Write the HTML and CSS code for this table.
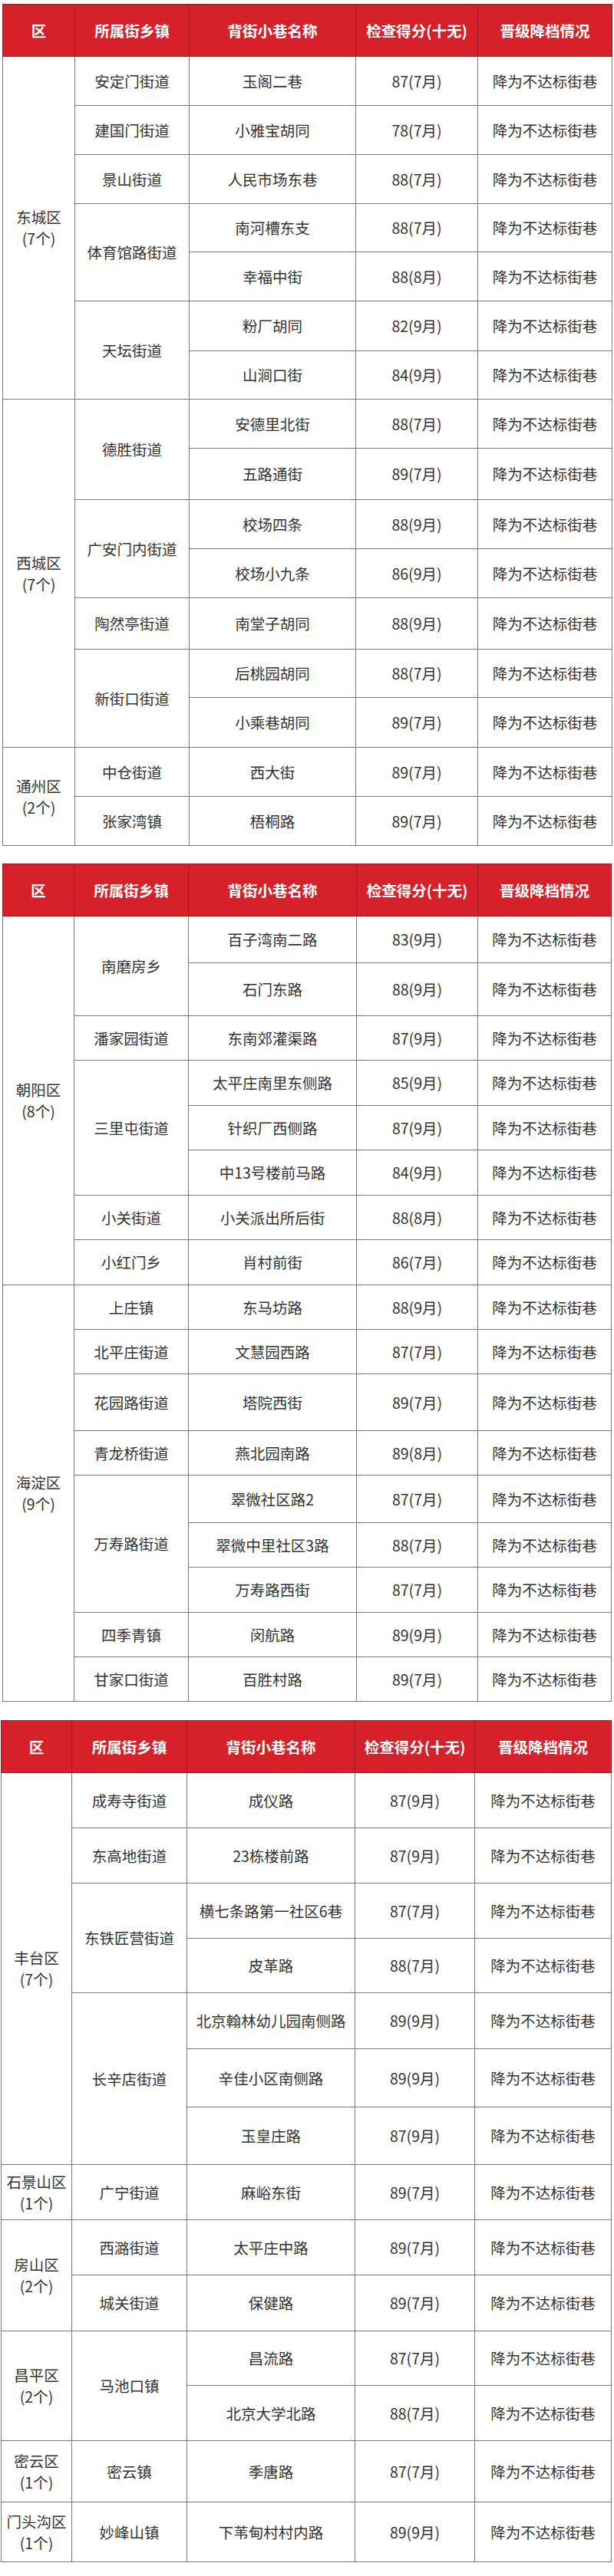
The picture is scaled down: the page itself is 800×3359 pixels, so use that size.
FILE: index.html
```html
<!DOCTYPE html>
<html lang="zh-CN">
<head>
<meta charset="utf-8">
<title>背街小巷检查结果</title>
<link rel="stylesheet" href="styles.css">
</head>
<body>
<div class="page">

<table class="t t1">
<colgroup><col class="c1"><col class="c2"><col class="c3"><col class="c4"><col class="c5"></colgroup>
<thead>
<tr class="hd"><th>区</th><th>所属街乡镇</th><th>背街小巷名称</th><th>检查得分(十无)</th><th>晋级降档情况</th></tr>
</thead>
<tbody>
<tr class="h64"><td class="d" rowspan="7"><span class="dn">东城区</span><span class="dc">(7个)</span></td><td>安定门街道</td><td>玉阁二巷</td><td>87(7月)</td><td>降为不达标街巷</td></tr>
<tr class="h64"><td>建国门街道</td><td>小雅宝胡同</td><td>78(7月)</td><td>降为不达标街巷</td></tr>
<tr class="h64"><td>景山街道</td><td>人民市场东巷</td><td>88(7月)</td><td>降为不达标街巷</td></tr>
<tr class="h63"><td rowspan="2">体育馆路街道</td><td>南河槽东支</td><td>88(7月)</td><td>降为不达标街巷</td></tr>
<tr class="h64"><td>幸福中街</td><td>88(8月)</td><td>降为不达标街巷</td></tr>
<tr class="h65"><td rowspan="2">天坛街道</td><td>粉厂胡同</td><td>82(9月)</td><td>降为不达标街巷</td></tr>
<tr class="h63"><td>山涧口街</td><td>84(9月)</td><td>降为不达标街巷</td></tr>
<tr class="h64"><td class="d" rowspan="7"><span class="dn">西城区</span><span class="dc">(7个)</span></td><td rowspan="2">德胜街道</td><td>安德里北街</td><td>88(7月)</td><td>降为不达标街巷</td></tr>
<tr class="h67"><td>五路通街</td><td>89(7月)</td><td>降为不达标街巷</td></tr>
<tr class="h64"><td rowspan="2">广安门内街道</td><td>校场四条</td><td>88(9月)</td><td>降为不达标街巷</td></tr>
<tr class="h64"><td>校场小九条</td><td>86(9月)</td><td>降为不达标街巷</td></tr>
<tr class="h67"><td>陶然亭街道</td><td>南堂子胡同</td><td>88(9月)</td><td>降为不达标街巷</td></tr>
<tr class="h63"><td rowspan="2">新街口街道</td><td>后桃园胡同</td><td>88(7月)</td><td>降为不达标街巷</td></tr>
<tr class="h65"><td>小乘巷胡同</td><td>89(7月)</td><td>降为不达标街巷</td></tr>
<tr class="h64"><td class="d" rowspan="2"><span class="dn">通州区</span><span class="dc">(2个)</span></td><td>中仓街道</td><td>西大街</td><td>89(7月)</td><td>降为不达标街巷</td></tr>
<tr class="h64"><td>张家湾镇</td><td>梧桐路</td><td>89(7月)</td><td>降为不达标街巷</td></tr>
</tbody>
</table>

<table class="t t2">
<colgroup><col class="c1"><col class="c2"><col class="c3"><col class="c4"><col class="c5"></colgroup>
<thead>
<tr class="hd"><th>区</th><th>所属街乡镇</th><th>背街小巷名称</th><th>检查得分(十无)</th><th>晋级降档情况</th></tr>
</thead>
<tbody>
<tr class="h61"><td class="d" rowspan="8"><span class="dn">朝阳区</span><span class="dc">(8个)</span></td><td rowspan="2">南磨房乡</td><td>百子湾南二路</td><td>83(9月)</td><td>降为不达标街巷</td></tr>
<tr class="h69"><td>石门东路</td><td>88(9月)</td><td>降为不达标街巷</td></tr>
<tr class="h58"><td>潘家园街道</td><td>东南郊灌渠路</td><td>87(9月)</td><td>降为不达标街巷</td></tr>
<tr class="h59"><td rowspan="3">三里屯街道</td><td>太平庄南里东侧路</td><td>85(9月)</td><td>降为不达标街巷</td></tr>
<tr class="h58"><td>针织厂西侧路</td><td>87(9月)</td><td>降为不达标街巷</td></tr>
<tr class="h59"><td>中13号楼前马路</td><td>84(9月)</td><td>降为不达标街巷</td></tr>
<tr class="h58"><td>小关街道</td><td>小关派出所后街</td><td>88(8月)</td><td>降为不达标街巷</td></tr>
<tr class="h59"><td>小红门乡</td><td>肖村前街</td><td>86(7月)</td><td>降为不达标街巷</td></tr>
<tr class="h58"><td class="d" rowspan="9"><span class="dn">海淀区</span><span class="dc">(9个)</span></td><td>上庄镇</td><td>东马坊路</td><td>88(9月)</td><td>降为不达标街巷</td></tr>
<tr class="h58"><td>北平庄街道</td><td>文慧园西路</td><td>87(7月)</td><td>降为不达标街巷</td></tr>
<tr class="h74"><td>花园路街道</td><td>塔院西街</td><td>89(7月)</td><td>降为不达标街巷</td></tr>
<tr class="h58"><td>青龙桥街道</td><td>燕北园南路</td><td>89(8月)</td><td>降为不达标街巷</td></tr>
<tr class="h62"><td rowspan="3">万寿路街道</td><td>翠微社区路2</td><td>87(7月)</td><td>降为不达标街巷</td></tr>
<tr class="h58"><td>翠微中里社区3路</td><td>88(7月)</td><td>降为不达标街巷</td></tr>
<tr class="h59"><td>万寿路西街</td><td>87(7月)</td><td>降为不达标街巷</td></tr>
<tr class="h58"><td>四季青镇</td><td>闵航路</td><td>89(9月)</td><td>降为不达标街巷</td></tr>
<tr class="h58"><td>甘家口街道</td><td>百胜村路</td><td>89(7月)</td><td>降为不达标街巷</td></tr>
</tbody>
</table>

<table class="t t3">
<colgroup><col class="c1"><col class="c2"><col class="c3"><col class="c4"><col class="c5"></colgroup>
<thead>
<tr class="hd"><th>区</th><th>所属街乡镇</th><th>背街小巷名称</th><th>检查得分(十无)</th><th>晋级降档情况</th></tr>
</thead>
<tbody>
<tr class="h72"><td class="d" rowspan="7"><span class="dn">丰台区</span><span class="dc">(7个)</span></td><td>成寿寺街道</td><td>成仪路</td><td>87(9月)</td><td>降为不达标街巷</td></tr>
<tr class="h72"><td>东高地街道</td><td>23栋楼前路</td><td>87(9月)</td><td>降为不达标街巷</td></tr>
<tr class="h72"><td rowspan="2">东铁匠营街道</td><td>横七条路第一社区6巷</td><td>87(7月)</td><td>降为不达标街巷</td></tr>
<tr class="h71"><td>皮革路</td><td>88(7月)</td><td>降为不达标街巷</td></tr>
<tr class="h73"><td rowspan="3">长辛店街道</td><td>北京翰林幼儿园南侧路</td><td>89(9月)</td><td>降为不达标街巷</td></tr>
<tr class="h76"><td>辛佳小区南侧路</td><td>89(9月)</td><td>降为不达标街巷</td></tr>
<tr class="h75"><td>玉皇庄路</td><td>87(9月)</td><td>降为不达标街巷</td></tr>
<tr class="h72"><td class="d"><span class="dn">石景山区</span><span class="dc">(1个)</span></td><td>广宁街道</td><td>麻峪东街</td><td>89(7月)</td><td>降为不达标街巷</td></tr>
<tr class="h72"><td class="d" rowspan="2"><span class="dn">房山区</span><span class="dc">(2个)</span></td><td>西潞街道</td><td>太平庄中路</td><td>89(7月)</td><td>降为不达标街巷</td></tr>
<tr class="h73"><td>城关街道</td><td>保健路</td><td>89(7月)</td><td>降为不达标街巷</td></tr>
<tr class="h71"><td class="d" rowspan="2"><span class="dn">昌平区</span><span class="dc">(2个)</span></td><td rowspan="2">马池口镇</td><td>昌流路</td><td>87(7月)</td><td>降为不达标街巷</td></tr>
<tr class="h72"><td>北京大学北路</td><td>88(7月)</td><td>降为不达标街巷</td></tr>
<tr class="h80"><td class="d"><span class="dn">密云区</span><span class="dc">(1个)</span></td><td>密云镇</td><td>季唐路</td><td>87(7月)</td><td>降为不达标街巷</td></tr>
<tr class="h78"><td class="d"><span class="dn">门头沟区</span><span class="dc">(1个)</span></td><td>妙峰山镇</td><td>下苇甸村村内路</td><td>89(9月)</td><td>降为不达标街巷</td></tr>
</tbody>
</table>

</div>
</body>
</html>
```

FILE: styles.css
```css
html, body {
  margin: 0;
  padding: 0;
  background: #ffffff;
}

.page {
  width: 800px;
  padding-bottom: 20px;
  font-family: "Noto Sans CJK SC", "Noto Sans", sans-serif;
}

.t {
  border-collapse: collapse;
  table-layout: fixed;
  font-size: 19.5px;
  color: #333333;
}

.t1 { margin: 5px 0 0 3px; width: 794px; }
.t2 { margin: 23px 0 0 3px; width: 793px; }
.t3 { margin: 24px 0 0 1px; width: 795px; }

.t1 .c1 { width: 94px; }
.t1 .c2 { width: 149px; }
.t1 .c3 { width: 217px; }
.t1 .c4 { width: 159px; }
.t1 .c5 { width: 175px; }

.t2 .c1 { width: 93px; }
.t2 .c2 { width: 149px; }
.t2 .c3 { width: 219px; }
.t2 .c4 { width: 158px; }
.t2 .c5 { width: 174px; }

.t3 .c1 { width: 92px; }
.t3 .c2 { width: 150px; }
.t3 .c3 { width: 219px; }
.t3 .c4 { width: 156px; }
.t3 .c5 { width: 178px; }

.hd { height: 68px; }

.t th {
  background: #d7212a;
  color: #ffffff;
  font-weight: 700;
  text-align: center;
  vertical-align: middle;
  padding: 0;
  border: 1px solid #a8161d;
  white-space: nowrap;
}

.t td {
  border: 1px solid #7a7a7a;
  text-align: center;
  vertical-align: middle;
  padding: 0;
  white-space: nowrap;
  line-height: 28px;
}

.dn,
.dc {
  display: block;
  line-height: 28px;
}

.h58 { height: 58px; }
.h59 { height: 59px; }
.h61 { height: 61px; }
.h62 { height: 62px; }
.h63 { height: 63px; }
.h64 { height: 64px; }
.h65 { height: 65px; }
.h67 { height: 67px; }
.h69 { height: 69px; }
.h71 { height: 71px; }
.h72 { height: 72px; }
.h73 { height: 73px; }
.h74 { height: 74px; }
.h75 { height: 75px; }
.h76 { height: 76px; }
.h78 { height: 78px; }
.h80 { height: 80px; }
```
